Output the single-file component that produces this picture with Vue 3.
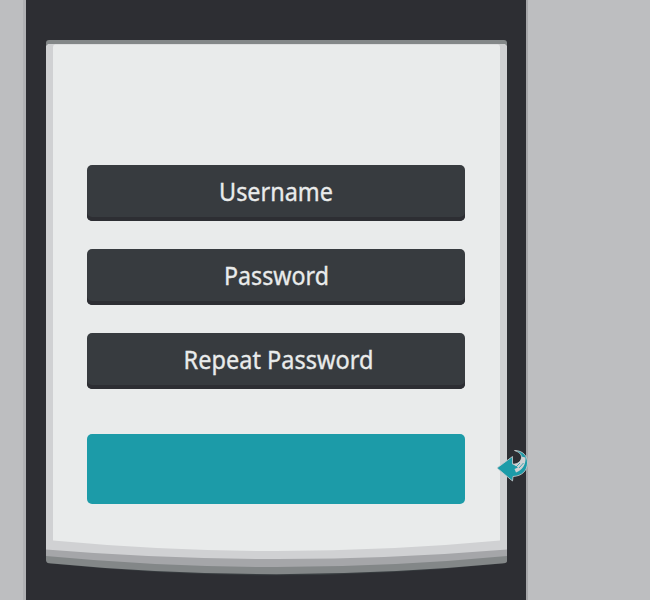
<script setup>
const fields = [
  { label: 'Username', width: 114, x: 0, },
  { label: 'Password', width: 105, x: 0, },
  { label: 'Repeat Password', width: 190, x: 2.5, },
]
</script>

<template>
  <main class="page">
    <section class="device">
      <div class="card">
        <svg class="sheet" viewBox="0 0 461 536" aria-hidden="true">
          <path fill="#383d40" d="M4 500H457V523.500Q230.500 547 4 523.500Z" />
          <path fill="#838788" d="M3 0H458Q461 0 461 3V521Q461 523 458 523.300Q230.500 545 3 523.300Q0 523 0 520V3Q0 0 3 0Z" />
          <path fill="#a5a6a9" d="M0 50H461V516Q230.500 538 0 516Z" />
          <path fill="#d0d1d3" d="M2 4H459L461 6V509.500Q230.500 528.500 0 509.500V6Z" />
          <path fill="#e9ebeb" d="M9 4.500H452Q454 4.500 454 7V500.500Q230.500 521.500 7 500.500V7Q7 4.500 9 4.500Z" />
        </svg>
        <form class="form" @submit.prevent>
          <div v-for="field in fields" :key="field.label" class="field">
            <svg class="label" :width="field.width" height="56">
              <text :x="field.x" y="36" :textLength="field.width" lengthAdjust="spacingAndGlyphs">{{ field.label }}</text>
            </svg>
          </div>
          <button class="submit" type="submit" aria-label="Submit"></button>
        </form>
        <svg class="arrow" viewBox="0 0 34 36" width="34" height="36" aria-hidden="true">
          <path d="M18.500 2.500C27 2.500 31.500 8 31.500 15C31 23 26 28 17 28.500L16.500 33L1 20L16.500 8.500V16C22 16.500 25.500 13 25.500 9.500C25.500 6 23 4 18.500 2.500Z" fill="#1c9ba8" stroke="#d0d1d3" stroke-width=".8" />
          <path d="M25.500 8.500L29.500 9.500C30 17 26 22 20 24.500L18.500 21L22 19.500L16.500 16C22 16.500 25.500 13 25.500 8.500Z" fill="#d0d1d3" />
          <path d="M24 15L20 19M27.500 15L23 20" fill="none" stroke="#1c9ba8" stroke-width=".8" />
        </svg>
      </div>
    </section>
  </main>
</template>

<style>
body { background: #bdbec0; }
</style>

<style scoped>
.page { height: 600px; overflow: hidden; background: #bdbec0; }
.device {
  box-sizing: border-box;
  width: 505px;
  height: 600px;
  margin-left: 23px;
  padding: 40px 19px 0 20px;
  border-left: 3px solid #b0b1b4;
  border-right: 2px solid #a5a6a9;
  background: #2d2e33;
}
.card { position: relative; width: 461px; height: 536px; }
.sheet { position: absolute; inset: 0; width: 461px; height: 536px; }
.form {
  position: relative;
  display: flex;
  flex-direction: column;
  gap: 28px;
  padding: 125px 42px 0 41px;
}
.field {
  box-sizing: border-box;
  display: flex;
  justify-content: center;
  height: 56px;
  border-radius: 5px;
  background: #373b3f;
  box-shadow: inset 0 -4px #2d2e33;
}
.label { display: block; overflow: visible; }
.label text {
  fill: #e9ebeb;
  stroke: #e9ebeb;
  stroke-width: .35px;
  font: 400 25.5px "Noto Sans", sans-serif;
}
.submit {
  height: 70px;
  margin: 17px 0 0;
  padding: 0;
  border: 0;
  border-radius: 5px;
  background: #1c9ba8;
}
.arrow { position: absolute; left: 450px; top: 408px; }
</style>
